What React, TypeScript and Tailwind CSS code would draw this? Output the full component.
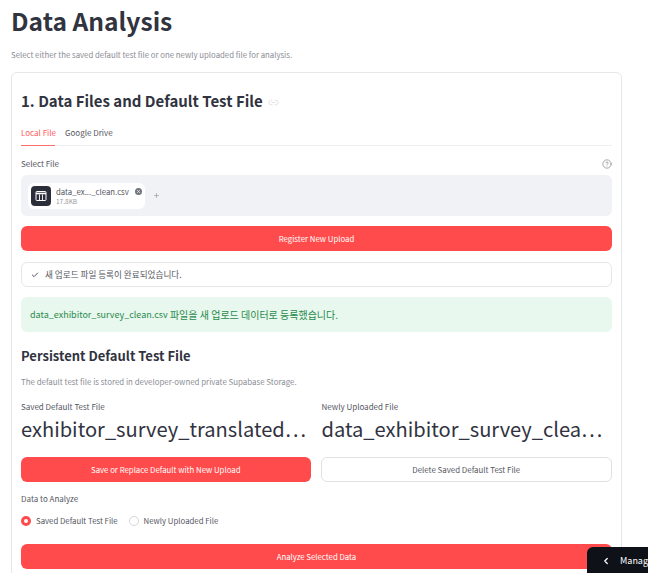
import { Check, ChevronLeft, CircleHelp, Link2, Plus, X } from "lucide-react"

const fontStack = "font-['Noto_Sans_CJK_KR','Noto_Sans',sans-serif]"

function RedButton({ label, className = "" }: { label: string; className?: string }) {
  return (
    <button className={`flex h-[25px] items-center justify-center rounded-[6px] bg-[#ff4b4b] text-[7.8px] text-white ${className}`}>
      {label}
    </button>
  )
}

function Metric({ label, value }: { label: string; value: string }) {
  return (
    <div className="min-w-0 flex-1">
      <p className="text-[8px] leading-[14px] text-[#55575f]">{label}</p>
      <p className="text-[20.1px] leading-[29px] whitespace-nowrap text-[#31333f]">{value}</p>
    </div>
  )
}

function TableIcon() {
  return (
    <svg viewBox="0 0 12 12" className="size-[12px]" fill="none" stroke="white">
      <rect x="1" y="1.5" width="10" height="9" rx="0.8" strokeWidth="1" />
      <path d="M1 3.5h10" strokeWidth="1.6" />
      <path d="M4.5 4.5v6M7.5 4.5v6" strokeWidth="0.9" />
    </svg>
  )
}

export default function App() {
  return (
    <div className={`relative h-[573px] w-[648px] overflow-hidden bg-white ${fontStack}`}>
      <div className="px-[11px] pt-[2px]">
        <h1 className="text-[24.6px] leading-[36px] font-bold text-[#31333f]">Data Analysis</h1>
        <p className="mt-[10px] text-[7.8px] leading-[14px] text-[#8b8d95]">
          Select either the saved default test file or one newly uploaded file for analysis.
        </p>

        <section className="mt-[10px] h-[520px] w-[611px] rounded-[6px] border border-[#e6e7ea] px-[9px]">
          <div className="mt-[16px] flex items-center gap-[5px]">
            <h2 className="text-[15px] leading-[24px] font-semibold text-[#31333f]">
              1. Data Files and Default Test File
            </h2>
            <Link2 className="mt-[2px] size-[11px] text-[#d5d6da]" strokeWidth={1.5} />
          </div>

          <div className="mt-[10px] flex h-[23px] gap-[10px] border-b border-[#eeeff1] text-[8px] leading-[20px]">
            <span className="h-[23px] w-[34px] border-b border-[#ff6c6c] whitespace-nowrap text-[#ff5a5a]">Local File</span>
            <span className="text-[#55575f]">Google Drive</span>
          </div>

          <div className="mt-[10px] flex h-[16px] items-center justify-between">
            <span className="text-[8px] text-[#55575f]">Select File</span>
            <CircleHelp className="size-[10px] text-[#74767e]" strokeWidth={1.5} />
          </div>

          <div className="mt-[3px] flex h-[41px] items-center rounded-[6px] bg-[#f0f2f6] pl-[7px]">
            <div className="flex h-[26px] w-[117px] items-center rounded-[6px] bg-white pl-[3px]">
              <div className="flex size-[20px] shrink-0 items-center justify-center rounded-[4px] bg-[#2b2d3a]">
                <TableIcon />
              </div>
              <div className="ml-[5px] w-[77px]">
                <p className="text-[7.8px] leading-[11px] text-[#55575f]">data_ex..._clean.csv</p>
                <p className="text-[6.5px] leading-[9px] text-[#9a9ca3]">17.8KB</p>
              </div>
              <span className="mb-[9px] ml-[2px] flex size-[7px] shrink-0 items-center justify-center rounded-full bg-[#73757d]">
                <X className="size-[5px] text-white" strokeWidth={3} />
              </span>
            </div>
            <Plus className="ml-[8px] size-[7px] text-[#8b8d95]" strokeWidth={2} />
          </div>

          <RedButton label="Register New Upload" className="mt-[10px] w-full" />

          <div className="mt-[11px] flex h-[25px] items-center gap-[6px] rounded-[6px] border border-[#e6e7ea] pl-[9px] text-[8.6px] text-[#55575f]">
            <Check className="size-[8px] text-[#31333f]" strokeWidth={2.5} />
            새 업로드 파일 등록이 완료되었습니다.
          </div>

          <div className="mt-[10px] flex h-[35px] items-center rounded-[6px] bg-[#e8f8ee] pl-[9px] text-[10px] whitespace-pre text-[#2a8a4c]">
            <span className="text-[9px]">data_exhibitor_survey_clean.csv</span> 파일을 새 업로드 데이터로 등록했습니다.
          </div>

          <h3 className="mt-[13px] text-[13px] leading-[22px] font-semibold text-[#31333f]">
            Persistent Default Test File
          </h3>
          <p className="mt-[8px] text-[7.9px] leading-[14px] text-[#8b8d95]">
            The default test file is stored in developer-owned private Supabase Storage.
          </p>

          <div className="mt-[11px] flex gap-[10px]">
            <Metric label="Saved Default Test File" value="exhibitor_survey_translated…" />
            <Metric label="Newly Uploaded File" value="data_exhibitor_survey_clea…" />
          </div>

          <div className="mt-[14px] flex gap-[10px]">
            <RedButton label="Save or Replace Default with New Upload" className="flex-1" />
            <button className="flex h-[25px] flex-1 items-center justify-center rounded-[6px] border border-[#e0e1e5] bg-white text-[7.9px] text-[#55575f]">
              Delete Saved Default Test File
            </button>
          </div>

          <p className="mt-[10px] text-[8px] leading-[14px] text-[#55575f]">Data to Analyze</p>

          <div className="mt-[7px] flex h-[16px] items-center text-[7.8px] text-[#55575f]">
            <span className="flex size-[10px] items-center justify-center rounded-full bg-[#ff4b4b]">
              <span className="size-[4px] rounded-full bg-white" />
            </span>
            <span className="ml-[5px]">Saved Default Test File</span>
            <span className="ml-[11px] size-[10px] rounded-full border border-[#d5d6da]" />
            <span className="ml-[5px]">Newly Uploaded File</span>
          </div>

          <RedButton label="Analyze Selected Data" className="mt-[15px] w-full" />
        </section>
      </div>

      <div className="absolute top-[547px] left-[587px] flex h-[30px] w-[61px] items-start overflow-hidden rounded-tl-[6px] bg-[#0e1117] pt-[8px] pl-[14px] text-[9px] leading-[12px] whitespace-nowrap text-white">
        <ChevronLeft className="mt-[1px] size-[10px] shrink-0" strokeWidth={3} />
        <span className="ml-[9px]">Manage</span>
      </div>
    </div>
  )
}
